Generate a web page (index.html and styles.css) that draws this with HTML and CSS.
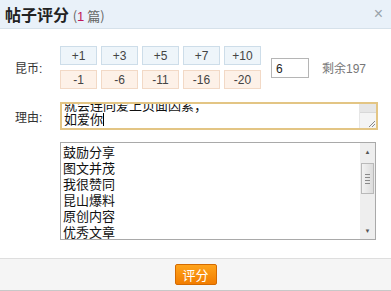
FILE: index.html
```html
<!DOCTYPE html>
<html lang="zh-CN">
<head>
    <meta charset="UTF-8">
    <title>帖子评分</title>
    <link rel="stylesheet" href="styles.css">
</head>
<body>
    <div class="dialog">
        <div class="hd">
            <h3>帖子评分 <span class="count">(<em>1</em> 篇)</span></h3>
            <span class="close">×</span>
        </div>

        <div class="bd">
            <div class="row coin-row">
                <label class="lbl">昆币:</label>
                <div class="btn-grid">
                    <span class="plus">+1</span>
                    <span class="plus">+3</span>
                    <span class="plus">+5</span>
                    <span class="plus">+7</span>
                    <span class="plus">+10</span>
                    <span class="minus">-1</span>
                    <span class="minus">-6</span>
                    <span class="minus">-11</span>
                    <span class="minus">-16</span>
                    <span class="minus">-20</span>
                </div>
                <div class="score-input">6</div>
                <span class="remain">剩余197</span>
            </div>

            <div class="row reason-row">
                <label class="lbl">理由:</label>
                <div class="reason">
                    <div class="reason-text">
                        <div class="scrolled">就会连同爱上页面因素；</div>
                        <div>如爱你<span class="caret"></span></div>
                    </div>
                    <div class="ta-bar">
                        <div class="ta-up"></div>
                        <div class="ta-track"></div>
                        <div class="ta-grip">
                            <svg width="9" height="9" viewBox="0 0 9 9"><path d="M8 2 L2 8 M8 5 L5 8" stroke="#888" stroke-width="1"/></svg>
                        </div>
                    </div>
                </div>
            </div>

            <div class="row list-row">
                <div class="listbox">
                    <ul>
                        <li>鼓励分享</li>
                        <li>图文并茂</li>
                        <li>我很赞同</li>
                        <li>昆山爆料</li>
                        <li>原创内容</li>
                        <li>优秀文章</li>
                    </ul>
                    <div class="sb">
                        <div class="sb-btn">&#9650;</div>
                        <div class="sb-track">
                            <div class="sb-thumb"><i></i><i></i><i></i><i></i></div>
                        </div>
                        <div class="sb-btn">&#9660;</div>
                    </div>
                </div>
            </div>
        </div>

        <div class="ft">
            <button class="submit">评分</button>
        </div>
    </div>
</body>
</html>
```

FILE: styles.css
```css
body {
    margin: 0;
    font-family: "Liberation Sans", "Noto Sans CJK SC", sans-serif;
    font-size: 12px;
    color: #333;
    background: #fff;
}

.dialog {
    width: 391px;
    height: 291px;
    display: flex;
    flex-direction: column;
}

.hd {
    height: 28px;
    background: #e9f1f9;
    border-bottom: 1px solid #d6e1ea;
    display: flex;
    align-items: center;
    justify-content: space-between;
    padding: 0 8px 0 5px;
}

.hd h3 {
    margin: 0;
    font-size: 16px;
    font-weight: bold;
    color: #222;
    font-family: "Noto Sans CJK SC", sans-serif;
}

.count {
    font-size: 13px;
    font-weight: normal;
    color: #666;
}

.count em {
    font-style: normal;
    color: #c0185c;
    font-family: "Liberation Sans", sans-serif;
}

.close {
    color: #9aa3ab;
    font-size: 16px;
    line-height: 1;
}

.bd {
    flex: 1;
    padding: 17px 0 0;
}

.row {
    display: flex;
    align-items: center;
}

.lbl {
    width: 45px;
    padding-left: 15px;
    font-size: 12px;
    color: #333;
}

.btn-grid {
    display: grid;
    grid-template-columns: repeat(5, 37px);
    grid-auto-rows: 19px;
    column-gap: 4px;
    row-gap: 5px;
}

.btn-grid span {
    display: flex;
    align-items: center;
    justify-content: center;
    font-size: 12px;
    color: #444;
    box-sizing: border-box;
}

.plus {
    background: #eef5fa;
    border: 1px solid #cddde9;
}

.minus {
    background: #fdf1e8;
    border: 1px solid #f2d9c6;
}

.score-input {
    width: 38px;
    height: 20px;
    box-sizing: border-box;
    border: 1px solid #b5b5b5;
    margin-left: 10px;
    padding: 3px 4px 0;
    font-size: 12px;
    color: #222;
}

.remain {
    margin-left: 13px;
    color: #777;
    font-size: 12px;
}

.reason-row {
    margin-top: 13px;
}

.reason {
    width: 318px;
    height: 28px;
    box-sizing: border-box;
    border: 2px solid #e3c584;
    display: flex;
    overflow: hidden;
}

.reason-text {
    flex: 1;
    padding-left: 2px;
    font-size: 13px;
    line-height: 14px;
    color: #111;
    font-family: "Noto Sans CJK SC", sans-serif;
    overflow: hidden;
}

.scrolled {
    margin-top: -6px;
}

.caret {
    display: inline-block;
    width: 1px;
    height: 13px;
    background: #000;
    vertical-align: -2px;
}

.ta-bar {
    width: 16px;
    display: flex;
    flex-direction: column;
    background: #f4f4f4;
    border-left: 1px solid #e6e6e6;
}

.ta-up {
    height: 8px;
    background: #e6e6e6;
    border-bottom: 1px solid #d8d8d8;
}

.ta-track {
    flex: 1;
}

.ta-grip {
    height: 9px;
    display: flex;
    justify-content: flex-end;
}

.list-row {
    margin-top: 12px;
    padding-left: 60px;
}

.listbox {
    width: 316px;
    height: 98px;
    box-sizing: border-box;
    border: 1px solid #a9a9a9;
    display: flex;
    overflow: hidden;
}

.listbox ul {
    flex: 1;
    list-style: none;
    margin: 0;
    padding: 1px 2px;
    font-size: 13px;
    line-height: 16px;
    color: #111;
    font-family: "Noto Sans CJK SC", sans-serif;
}

.sb {
    width: 15px;
    display: flex;
    flex-direction: column;
    background: #eeeeee;
}

.sb-btn {
    height: 17px;
    font-size: 6px;
    color: #555;
    display: flex;
    align-items: center;
    justify-content: center;
}

.sb-track {
    flex: 1;
    padding-top: 3px;
}

.sb-thumb {
    height: 31px;
    margin: 0 1px;
    box-sizing: border-box;
    border: 1px solid #b9b9b9;
    background: linear-gradient(90deg, #f2f2f2, #dcdcdc);
    display: flex;
    flex-direction: column;
    justify-content: center;
    align-items: center;
    gap: 2px;
}

.sb-thumb i {
    display: block;
    width: 5px;
    height: 1px;
    background: #8a8a8a;
}

.ft {
    height: 31px;
    background: #f5f5f5;
    border-top: 1px solid #dedede;
    border-bottom: 1px solid #c8c8c8;
    display: flex;
    align-items: center;
    justify-content: center;
}

.submit {
    width: 42px;
    height: 21px;
    padding: 0;
    border: 1px solid #d46a00;
    border-radius: 2px;
    background: linear-gradient(#ffa41c, #f27d00);
    color: #fff;
    font-size: 13px;
    font-family: "Noto Sans CJK SC", sans-serif;
    line-height: 18px;
}
```
